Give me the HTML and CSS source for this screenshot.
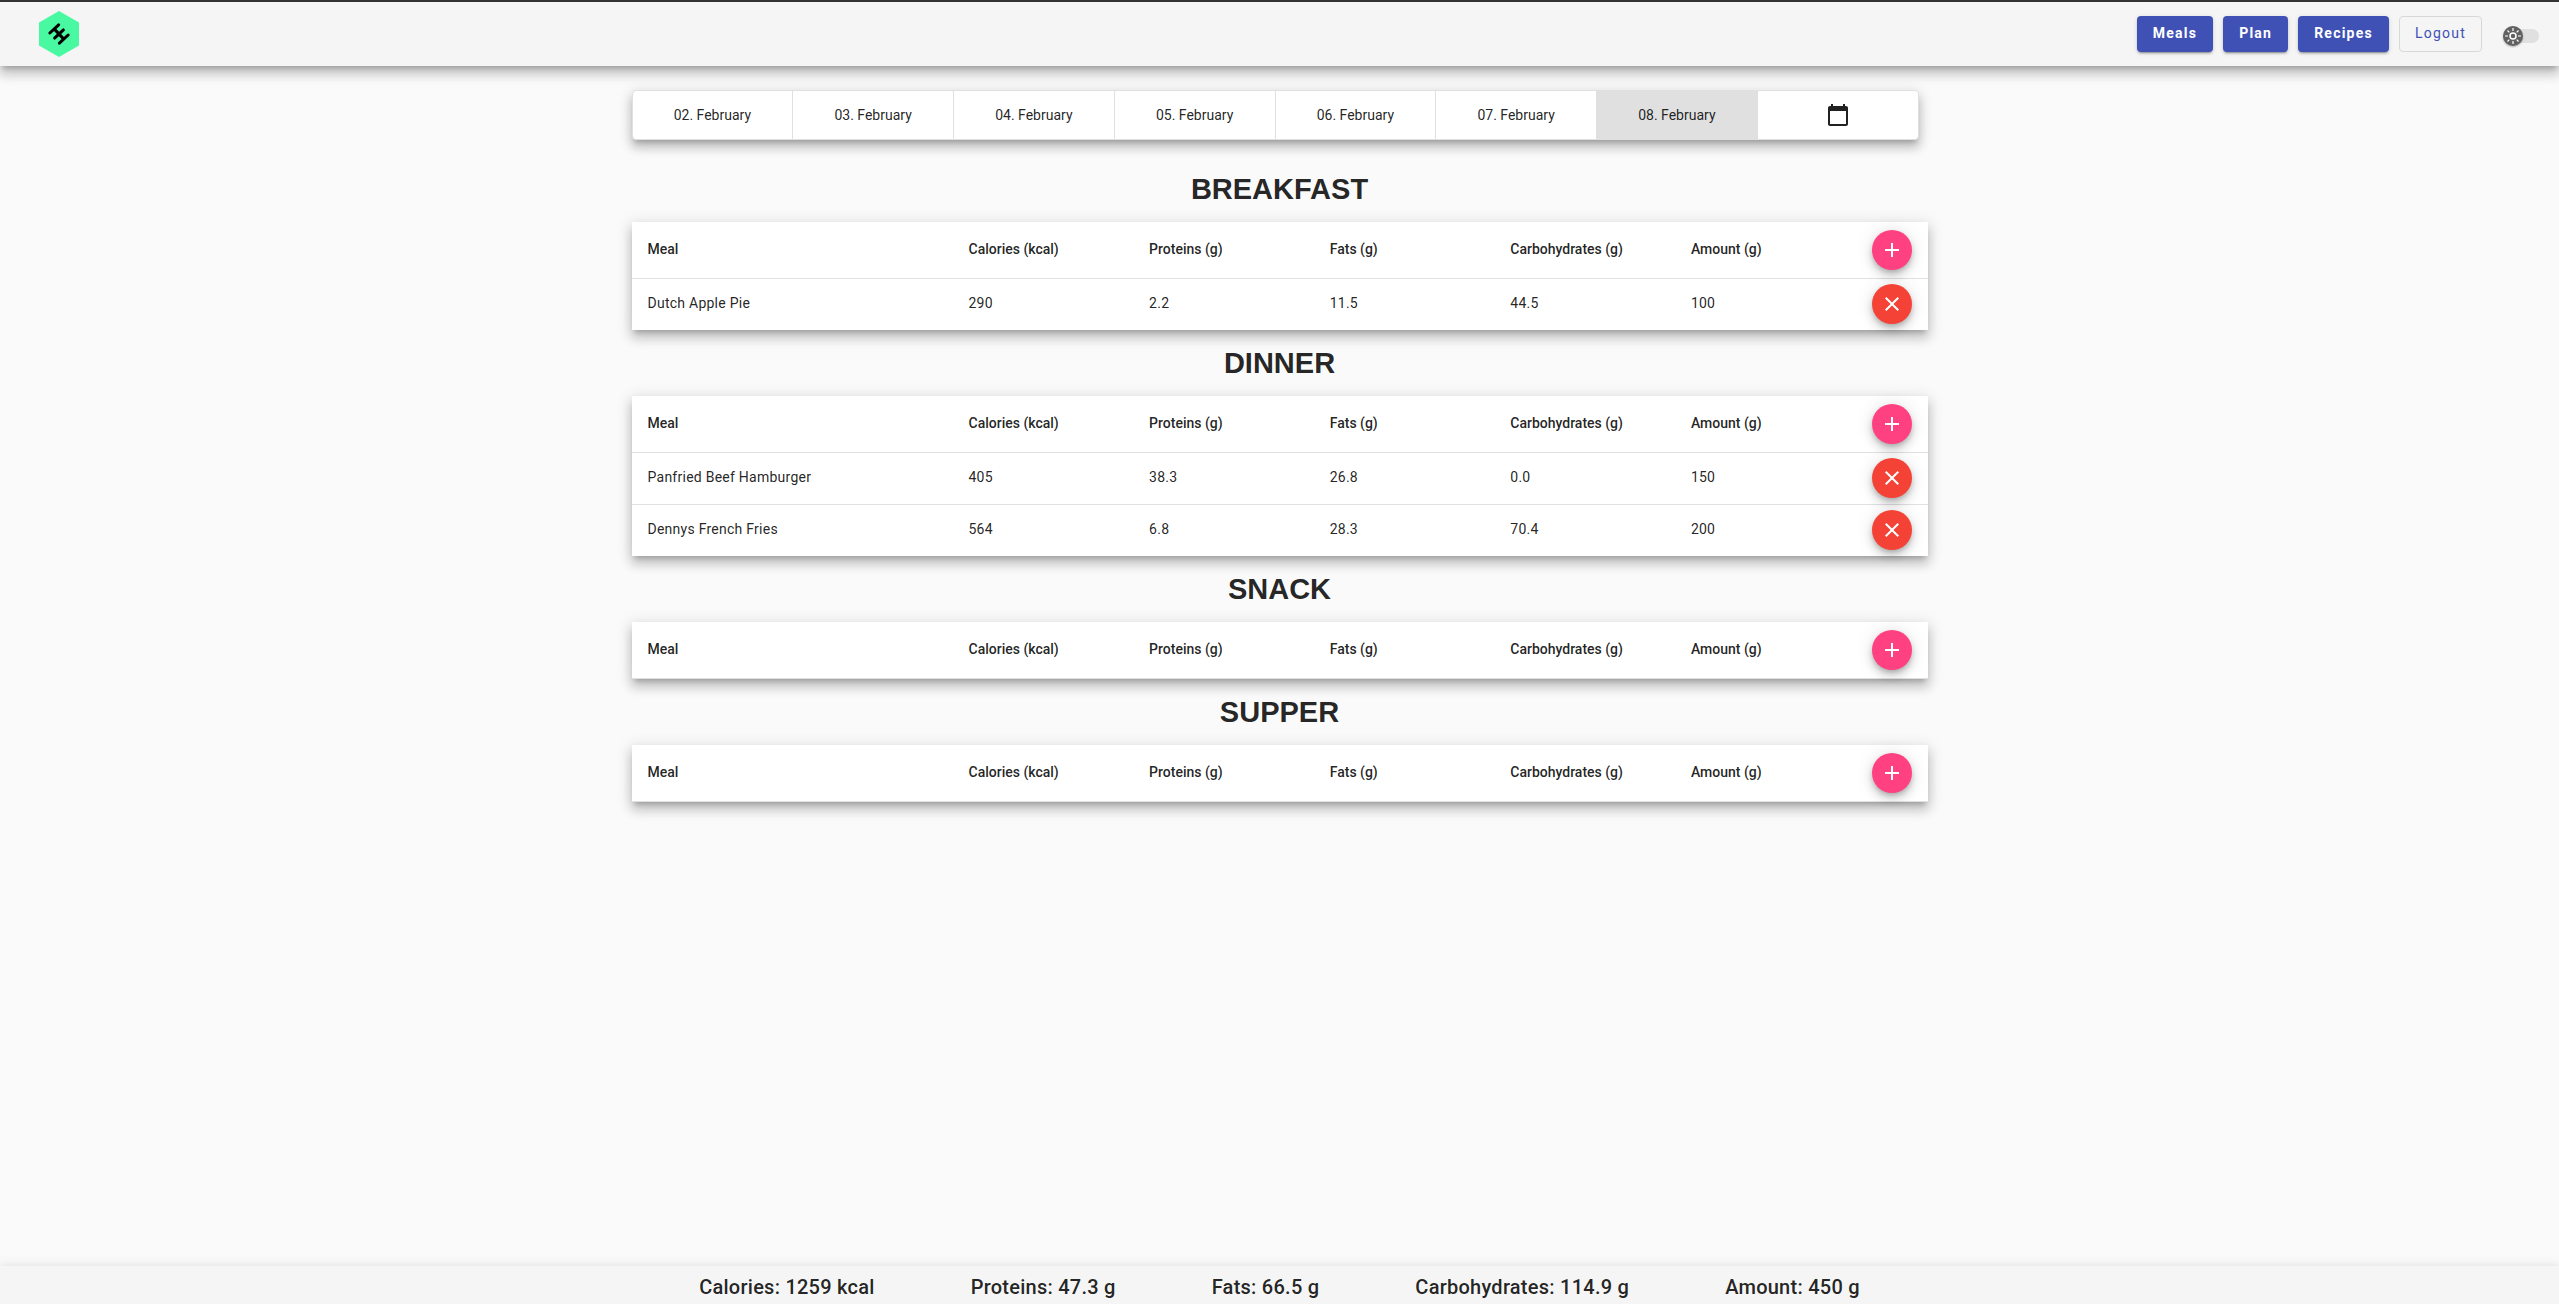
FILE: index.html
```html
<!DOCTYPE html>
<html lang="en">
<head>
<meta charset="utf-8">
<title>Meals</title>
<link rel="stylesheet" href="styles.css">
</head>
<body>
<svg class="sprite" aria-hidden="true">
  <symbol id="add" viewBox="0 0 24 24"><path d="M19 13h-6v6h-2v-6H5v-2h6V5h2v6h6v2z"/></symbol>
  <symbol id="close" viewBox="0 0 24 24"><path d="M19 6.41L17.59 5 12 10.59 6.41 5 5 6.41 10.59 12 5 17.59 6.41 19 12 13.41 17.59 19 19 17.59 13.41 12z"/></symbol>
</svg>
<header class="toolbar">
  <a class="logo" href="#" aria-label="Home">
    <svg viewBox="0 0 40 46" width="40" height="46">
      <path d="M20 0L40 11.500V34.500L20 46L0 34.500V11.500Z" fill="#48f9a2"/>
      <g transform="translate(20 23) rotate(-43)" stroke="#000" stroke-width="3" stroke-linecap="round">
        <path d="M-6 -7H6M-6 7H6M-6 0H6M0 -7V7"/>
      </g>
    </svg>
  </a>
  <nav class="nav">
    <button class="btn btn-primary" type="button">Meals</button>
    <button class="btn btn-primary" type="button">Plan</button>
    <button class="btn btn-primary" type="button">Recipes</button>
    <button class="btn btn-outline" type="button">Logout</button>
  </nav>
  <label class="theme">
    <input class="theme-input" type="checkbox" aria-label="Dark theme">
    <span class="theme-thumb">
      <svg viewBox="0 0 20 20" width="20" height="20" fill="none" stroke="#fff">
        <circle cx="10" cy="10" r="3" stroke-width="1.500"/>
        <path stroke-width="1.200" d="M10 2v3M10 15v3M2 10h3M15 10h3M4.500 4.500l1.800 1.800M13.700 13.700l1.800 1.800M4.500 15.500l1.800-1.800M13.700 6.300l1.800-1.800"/>
      </svg>
    </span>
  </label>
</header>
<main class="content">
  <div class="dates">
    <button class="date" type="button">02. February</button>
    <button class="date" type="button">03. February</button>
    <button class="date" type="button">04. February</button>
    <button class="date" type="button">05. February</button>
    <button class="date" type="button">06. February</button>
    <button class="date" type="button">07. February</button>
    <button class="date date-active" type="button">08. February</button>
    <button class="date" type="button" aria-label="Pick a date"><svg class="icon" viewBox="0 0 24 24"><path d="M20 3h-1V1h-2v2H7V1H5v2H4c-1.100 0-2 .9-2 2v16c0 1.100.9 2 2 2h16c1.100 0 2-.9 2-2V5c0-1.100-.9-2-2-2zm0 18H4V8h16v13z"/></svg></button>
  </div>

  <h2 class="title">BREAKFAST</h2>
  <table class="meals">
    <thead><tr><th class="meal">Meal</th><th>Calories (kcal)</th><th>Proteins (g)</th><th>Fats (g)</th><th>Carbohydrates (g)</th><th>Amount (g)</th><th class="action"><button class="fab" type="button" aria-label="Add"><svg class="icon"><use href="#add"/></svg></button></th></tr></thead>
    <tbody>
      <tr><td>Dutch Apple Pie</td><td>290</td><td>2.2</td><td>11.5</td><td>44.5</td><td>100</td><td class="action"><button class="fab fab-warn" type="button" aria-label="Remove"><svg class="icon"><use href="#close"/></svg></button></td></tr>
    </tbody>
  </table>

  <h2 class="title">DINNER</h2>
  <table class="meals">
    <thead><tr><th class="meal">Meal</th><th>Calories (kcal)</th><th>Proteins (g)</th><th>Fats (g)</th><th>Carbohydrates (g)</th><th>Amount (g)</th><th class="action"><button class="fab" type="button" aria-label="Add"><svg class="icon"><use href="#add"/></svg></button></th></tr></thead>
    <tbody>
      <tr><td>Panfried Beef Hamburger</td><td>405</td><td>38.3</td><td>26.8</td><td>0.0</td><td>150</td><td class="action"><button class="fab fab-warn" type="button" aria-label="Remove"><svg class="icon"><use href="#close"/></svg></button></td></tr>
      <tr><td>Dennys French Fries</td><td>564</td><td>6.8</td><td>28.3</td><td>70.4</td><td>200</td><td class="action"><button class="fab fab-warn" type="button" aria-label="Remove"><svg class="icon"><use href="#close"/></svg></button></td></tr>
    </tbody>
  </table>

  <h2 class="title">SNACK</h2>
  <table class="meals">
    <thead><tr><th class="meal">Meal</th><th>Calories (kcal)</th><th>Proteins (g)</th><th>Fats (g)</th><th>Carbohydrates (g)</th><th>Amount (g)</th><th class="action"><button class="fab" type="button" aria-label="Add"><svg class="icon"><use href="#add"/></svg></button></th></tr></thead>
  </table>

  <h2 class="title">SUPPER</h2>
  <table class="meals">
    <thead><tr><th class="meal">Meal</th><th>Calories (kcal)</th><th>Proteins (g)</th><th>Fats (g)</th><th>Carbohydrates (g)</th><th>Amount (g)</th><th class="action"><button class="fab" type="button" aria-label="Add"><svg class="icon"><use href="#add"/></svg></button></th></tr></thead>
  </table>
</main>
<footer class="totals">
  <span>Calories: 1259 kcal</span>
  <span>Proteins: 47.3 g</span>
  <span>Fats: 66.5 g</span>
  <span>Carbohydrates: 114.9 g</span>
  <span>Amount: 450 g</span>
</footer>
</body>
</html>
```
FILE: styles.css
```css
:root {
  --ink: rgba(0, 0, 0, 0.87);
  --line: #e0e0e0;
  --elevation: 0 5px 5px -3px rgba(0, 0, 0, 0.2), 0 8px 10px 1px rgba(0, 0, 0, 0.14), 0 3px 14px 2px rgba(0, 0, 0, 0.12);
}

* { box-sizing: border-box; }

body {
  margin: 0;
  min-height: 100vh;
  display: flex;
  flex-direction: column;
  background: #fafafa;
  color: var(--ink);
  font-family: Roboto, "Liberation Sans", sans-serif;
  font-size: 14px;
}

button { font: inherit; color: inherit; cursor: pointer; }

.sprite { display: none; }

.toolbar {
  display: flex;
  align-items: center;
  height: 66px;
  padding: 0 20px 0 39px;
  border-top: 2px solid #333;
  background: #f5f5f5;
  box-shadow: var(--elevation);
}

.logo { display: flex; }

.nav {
  display: flex;
  gap: 10px;
  margin-left: auto;
}

.btn {
  height: 36px;
  padding: 0 16px 2px;
  border: 0;
  border-radius: 4px;
  letter-spacing: 0.088em;
}

.btn-primary {
  background: #3f51b5;
  color: #fff;
  font-weight: 700;
  box-shadow: 0 3px 1px -2px rgba(0, 0, 0, 0.2), 0 2px 2px 0 rgba(0, 0, 0, 0.14), 0 1px 5px 0 rgba(0, 0, 0, 0.12);
}

.btn-outline {
  border: 1px solid #d8d8d8;
  padding: 0 15px 2px;
  background: transparent;
  color: #3f51b5;
  font-weight: 400;
}

.theme {
  position: relative;
  width: 36px;
  height: 14px;
  margin: 4px 0 0 21px;
  border-radius: 7px;
  background: #e0e0e0;
}

.theme-input {
  position: absolute;
  inset: 0;
  margin: 0;
  opacity: 0;
}

.theme-thumb {
  position: absolute;
  top: -3px;
  left: 0;
  width: 20px;
  height: 20px;
  border-radius: 50%;
  background: #616161;
  box-shadow: 0 1px 2px rgba(0, 0, 0, 0.3);
}

.theme-thumb svg { display: block; }

.content {
  width: 100%;
  max-width: 1296px;
  margin: 0 auto;
  padding: 24px 0;
}

.dates {
  display: flex;
  height: 50px;
  margin: 0 9px 16px 0;
  border: 1px solid var(--line);
  border-radius: 4px;
  background: #fff;
  box-shadow: var(--elevation);
}

.date {
  display: flex;
  flex: 1;
  align-items: center;
  justify-content: center;
  padding: 0 0 1px;
  border: 0;
  border-left: 1px solid var(--line);
  background: transparent;
}

.date:first-child { border-left: 0; }

.date-active { background: var(--line); }

.icon {
  width: 24px;
  height: 24px;
  fill: currentColor;
}

.title {
  margin: 0;
  font: 700 29px/66px "Liberation Sans", Arial, sans-serif;
  text-align: center;
}

.meals {
  width: 100%;
  table-layout: fixed;
  border-spacing: 0;
  background: #fff;
  box-shadow: var(--elevation);
}

.meals th,
.meals td {
  padding: 0 0 2px;
  border-bottom: 1px solid var(--line);
  text-align: left;
}

.meals th {
  height: 57px;
  font-weight: 500;
}

.meals td {
  height: 52px;
  padding-bottom: 3px;
  letter-spacing: 0.018em;
}

.meals tbody tr:last-child td {
  height: 51px;
  border-bottom: 0;
}

.meals th:first-child,
.meals td:first-child { padding-left: 16px; }

.meal { width: 337px; }

.meals .action {
  width: 56px;
  padding-bottom: 0;
}

.meals td.action { padding-bottom: 1px; }

.fab {
  display: flex;
  align-items: center;
  justify-content: center;
  width: 40px;
  height: 40px;
  padding: 0;
  border: 0;
  border-radius: 50%;
  background: #ff4081;
  color: #fff;
  box-shadow: 0 3px 5px -1px rgba(0, 0, 0, 0.2), 0 6px 10px 0 rgba(0, 0, 0, 0.14), 0 1px 18px 0 rgba(0, 0, 0, 0.12);
}

.fab-warn { background: #f44336; }

.totals {
  display: flex;
  justify-content: center;
  gap: 96px;
  margin-top: auto;
  padding: 5px 0 1px;
  background: #f5f5f5;
  box-shadow: var(--elevation);
  font-size: 20px;
  font-weight: 500;
  line-height: 32px;
  letter-spacing: 0.0125em;
}
```
